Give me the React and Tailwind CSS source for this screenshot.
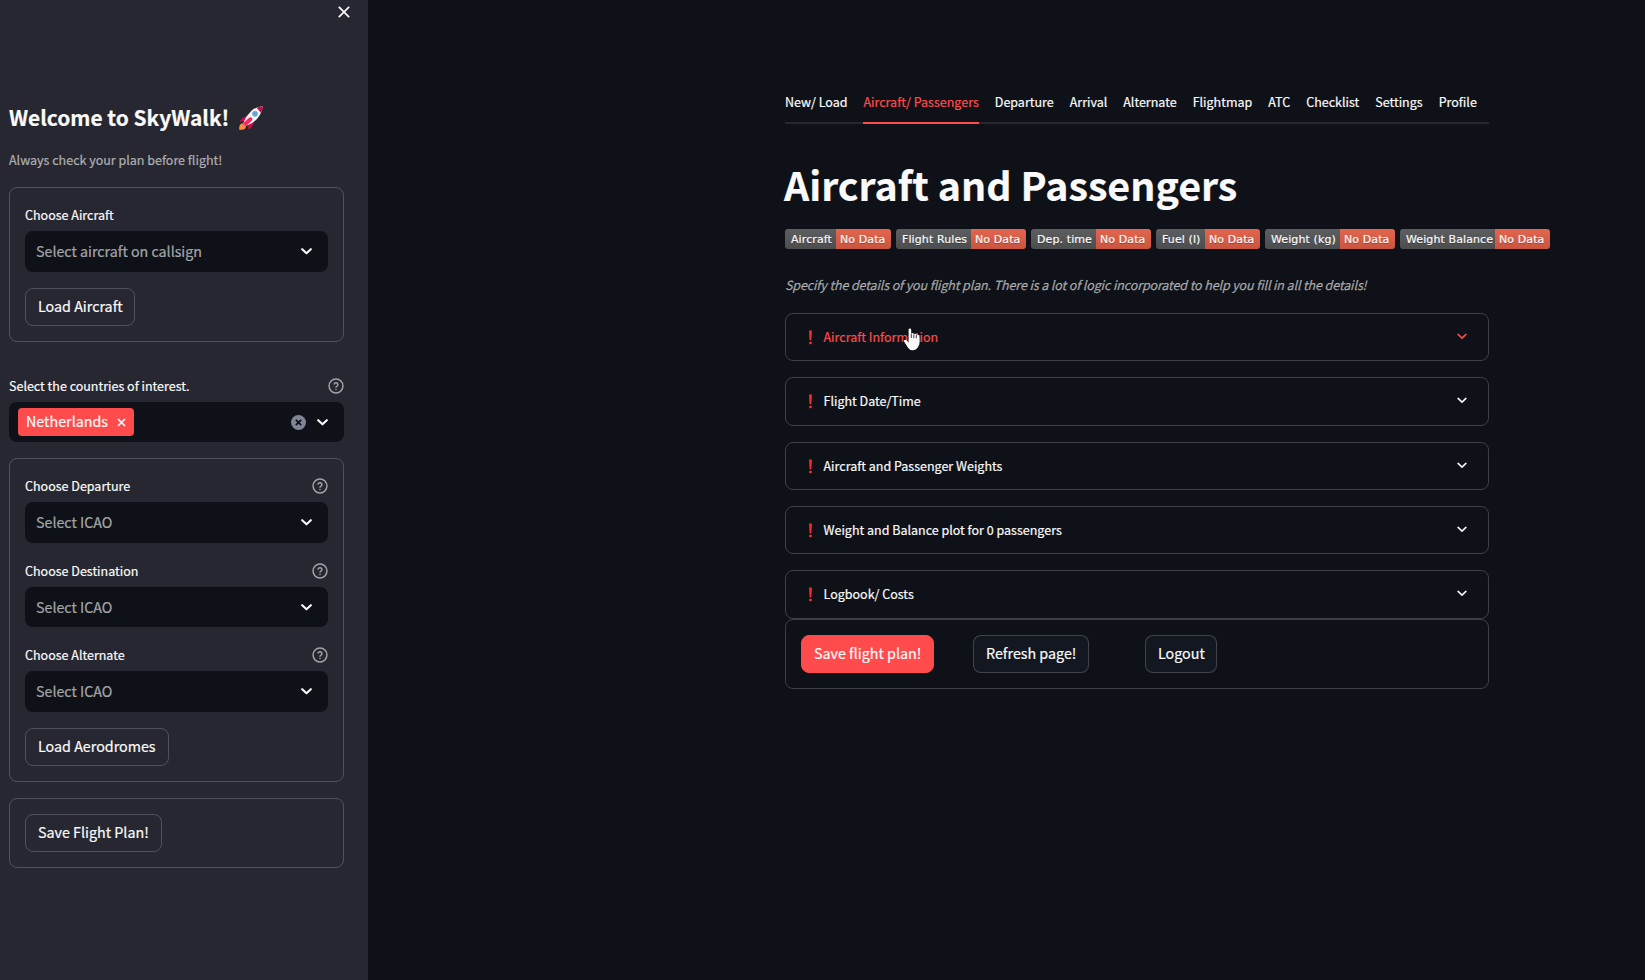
const BODY = "text-[12.5px] leading-[23px]";

function Chevron({ className = "", stroke = 2.1, w = 11, h = 7 }) {
  return (
    <svg className={className} width={w} height={h} viewBox="0 0 11 7" fill="none" stroke="currentColor" strokeWidth={stroke} strokeLinecap="round" strokeLinejoin="round">
      <path d="M1.2 1.2 5.5 5.3 9.8 1.2" />
    </svg>
  );
}

function Help() {
  return (
    <svg className="mt-[4px] text-[#a3a4a9]" width="16" height="16" viewBox="0 0 24 24" fill="none" stroke="currentColor" strokeWidth="2.2" strokeLinecap="round" strokeLinejoin="round">
      <circle cx="12" cy="12" r="10.4" />
      <path d="M9.1 9a3 3 0 0 1 5.8 1c0 2-2.9 2.6-2.9 4" />
      <path d="M12 17.4h.01" />
    </svg>
  );
}

function Label({ children, help }) {
  return (
    <div className={`flex h-7 items-start justify-between ${BODY}`}>
      <span>{children}</span>
      {help && <Help />}
    </div>
  );
}

function Select({ placeholder, short }) {
  return (
    <div className={`flex items-start justify-between rounded-lg bg-[#0e1117] pl-[11px] pr-4 ${short ? "h-[40px]" : "h-[41px]"}`}>
      <span className="text-[14.25px] leading-[40px] text-[#fafafa]/60">{placeholder}</span>
      <Chevron className="mt-[17px]" />
    </div>
  );
}

function Button({ children, className }) {
  return (
    <button className={`flex h-[38px] rounded-lg border pl-[12px] text-[14.3px] leading-[34px] whitespace-nowrap ${className}`}>
      {children}
    </button>
  );
}

function Card({ children, className = "" }) {
  return <div className={`rounded-lg border border-[#fafafa]/20 p-[15px] ${className}`}>{children}</div>;
}

function Rocket() {
  return (
    <svg width="24" height="24" viewBox="0 0 24 24">
      <path d="M8.4 9.2 3 12.6Q1.2 14 .8 15.6L6 15Z" fill="#ca0b4a" />
      <path d="M15.4 15.6 12.6 21Q11.8 22.6 9.8 23.4L8.6 18.6Z" fill="#ca0b4a" />
      <path d="M3.4 17.2Q1.4 17.4.6 19.4 0 21.4.2 23.8 3.4 24 5.2 23.2 7 22.2 7 20.4Z" fill="#ff8a3d" />
      <path d="M23.6.3Q17 .6 12.2 5 7 10 4.2 17.2L7 20Q14.4 17.2 18.8 12 23.2 6.8 23.6.3Z" fill="#fdf6f6" />
      <path d="M17.5 1.8Q20.4.5 23.7.3 23.7 3.6 22 7Z" fill="#ca0b4a" />
      <path d="M4.2 17.2 7 20.2 13 14.4Q13.8 12.4 12.6 11.6 11.4 10.8 9.8 12Z" fill="#f8255f" />
      <circle cx="16" cy="7.8" r="2.7" fill="#5ba8dc" stroke="#8db5d0" strokeWidth=".7" />
    </svg>
  );
}

function Sidebar() {
  return (
    <aside className="flex h-full w-[368px] shrink-0 flex-col bg-[#262730] pl-[9px] pr-[24px]">
      <div className="flex h-[105px] justify-end pt-[6px]">
        <svg className="-mr-[6px]" width="12" height="12" viewBox="0 0 12 12" stroke="currentColor" strokeWidth="1.7" strokeLinecap="square">
          <path d="M1.4 1.4 10.6 10.6M10.6 1.4 1.4 10.6" />
        </svg>
      </div>
      <h2 className="flex h-[43px] gap-[10px] whitespace-nowrap text-[20.9px] font-bold leading-[24px]">
        Welcome to SkyWalk!
        <span className="pt-[1px]"><Rocket /></span>
      </h2>
      <p className={`h-[39px] text-[#fafafa]/60 ${BODY}`}>Always check your plan before flight!</p>

      <Card>
        <Label>Choose Aircraft</Label>
        <Select placeholder="Select aircraft on callsign" />
        <Button className="mt-4 w-[110px] border-[#fafafa]/20">Load Aircraft</Button>
      </Card>

      <div className="mt-8">
        <Label help>Select the countries of interest.</Label>
        <div className="flex h-10 items-center rounded-lg bg-[#0e1117] pl-[9px] pr-4">
          <span className="flex h-7 w-[116px] items-center rounded bg-[#ff4b4b] pl-2 text-[14.3px] leading-[26px]">
            <span className="w-[91px] pb-0.5">Netherlands</span>
            <svg width="9" height="9" viewBox="0 0 9 9" stroke="currentColor" strokeWidth="1.7">
              <path d="M1 1 8 8M8 1 1 8" />
            </svg>
          </span>
          <span className="ml-auto flex items-center gap-[11px]">
            <svg width="15" height="15" viewBox="0 0 15 15">
              <circle cx="7.5" cy="7.5" r="7.5" fill="#808495" />
              <path d="M4.8 4.8 10.2 10.2M10.2 4.8 4.8 10.2" stroke="#0e1117" strokeWidth="1.7" />
            </svg>
            <Chevron />
          </span>
        </div>
      </div>

      <Card className="mt-4">
        <Label help>Choose Departure</Label>
        <Select placeholder="Select ICAO" />
        <div className="mt-4">
          <Label help>Choose Destination</Label>
          <Select placeholder="Select ICAO" short />
        </div>
        <div className="mt-4">
          <Label help>Choose Alternate</Label>
          <Select placeholder="Select ICAO" />
        </div>
        <Button className="mt-4 w-[144px] border-[#fafafa]/20">Load Aerodromes</Button>
      </Card>

      <Card className="mt-4">
        <Button className="w-[137px] border-[#fafafa]/20">Save Flight Plan!</Button>
      </Card>
    </aside>
  );
}

const TABS = ["New/ Load", "Aircraft/ Passengers", "Departure", "Arrival", "Alternate", "Flightmap", "ATC", "Checklist", "Settings", "Profile"];

const BADGES = [
  ["Aircraft", "w-[51px]"],
  ["Flight Rules", "w-[75px]"],
  ["Dep. time", "w-[65px]"],
  ["Fuel (l)", "w-[49px]"],
  ["Weight (kg)", "w-[75px]"],
  ["Weight Balance", "w-[95px]"],
];

const SECTIONS = [
  ["Aircraft Information", "h-[48px]"],
  ["Flight Date/Time", "h-[49px]"],
  ["Aircraft and Passenger Weights", "h-[48px]"],
  ["Weight and Balance plot for 0 passengers", "h-[48px]"],
  ["Logbook/ Costs", "h-[49px]"],
];

function Pointer() {
  return (
    <svg className="absolute left-[117px] top-[14px]" width="18" height="23" viewBox="0 0 18 23" fill="#fafafa">
      <path d="M5.6 1.8Q5.6.4 6.9.4T8.2 1.8V5.6Q8.6 5 9.5 5.1 10.6 5.2 10.7 6.1 11.2 5.6 12 5.7 13.1 5.9 13.2 6.8 13.7 6.4 14.5 6.6 16.6 7.2 16.6 9V14Q16.6 17 15 19 13 22.3 9.8 22.3 6.6 22.3 4.8 19.4L1.2 13.8Q.4 12.6 1.5 12 2.8 11.4 4.2 13L5.6 14.6Z" />
      <path d="M8.3 5.6V10M10.8 6.3V10.2M13.3 7V10.4" stroke="#0e1117" strokeWidth=".8" />
    </svg>
  );
}

function Main() {
  return (
    <main className="flex min-w-0 flex-1 flex-col pl-[417px] pt-[90px]">
      <nav className={`flex h-[34px] w-[704px] gap-4 whitespace-nowrap border-b-2 border-[#262730] ${BODY}`}>
        {TABS.map((t, i) => (
          <span key={t} className={`h-[34px] ${i === 1 ? "border-b-2 border-[#ff4b4b] text-[#ff4b4b]" : ""}`}>{t}</span>
        ))}
      </nav>

      <h1 className="-ml-px mt-[36px] h-[69px] text-[39.35px] font-bold leading-[48px]">Aircraft and Passengers</h1>

      <div className="flex gap-[5px] font-['DejaVu_Sans',sans-serif] text-[11px] leading-[21px] tracking-[0.1px] [text-shadow:0_1px_0_rgba(1,1,1,.3)]">
        {BADGES.map(([name, width]) => (
          <div key={name} className="flex h-5 overflow-hidden rounded-[3px]">
            <span className={`whitespace-nowrap bg-linear-to-b from-[#5d5e60] to-[#4c4d4f] pl-[6px] ${width}`}>{name}</span>
            <span className="w-[55px] bg-linear-to-b from-[#e2664f] to-[#ca543e] pl-[4px]">No Data</span>
          </div>
        ))}
      </div>

      <p className="mt-[24px] h-[40px] whitespace-nowrap text-[12.5px] italic leading-[23px] tracking-[-0.115px] text-[#fafafa]/60">
        Specify the details of you flight plan. There is a lot of logic incorporated to help you fill in all the details!
      </p>

      <div className="flex w-[704px] flex-col gap-4">
        {SECTIONS.map(([title, height], i) => (
          <div key={title} className={`relative flex items-start rounded-lg border border-[#fafafa]/20 pl-[22px] pr-[21px] ${height} ${i === 0 ? "text-[#ff4b4b]" : ""}`}>
            <svg className="mt-[16px] shrink-0" width="5" height="15" viewBox="0 0 5 15" fill="#f92f2f">
              <path d="M1.1.8Q2.5-.1 3.9.8L3.4 10Q2.5 10.8 1.6 10Z" />
              <rect x="1.2" y="11.8" width="2.6" height="2.4" rx=".8" />
            </svg>
            <span className={`ml-[10.5px] mt-[11px] ${BODY}`}>{title}</span>
            <Chevron className="ml-auto mt-[19px]" w={10} h={7} stroke={1.7} />
            {i === 0 && <Pointer />}
          </div>
        ))}
      </div>

      <div className="grid h-[70px] w-[704px] grid-cols-[172px_172px_auto] rounded-lg border border-[#fafafa]/20 p-[15px]">
        <Button className="w-[133px] border-[#ff4b4b] bg-[#ff4b4b]">Save flight plan!</Button>
        <Button className="w-[116px] border-[#fafafa]/20 bg-[#131720]">Refresh page!</Button>
        <Button className="w-[72px] border-[#fafafa]/20 bg-[#131720]">Logout</Button>
      </div>
    </main>
  );
}

export default function App() {
  return (
    <div className="flex h-[980px] w-[1645px] overflow-hidden bg-[#0e1117] font-['Noto_Sans_CJK_SC',sans-serif] text-[#fafafa] [-webkit-text-stroke:0.2px]">
      <Sidebar />
      <Main />
    </div>
  );
}
